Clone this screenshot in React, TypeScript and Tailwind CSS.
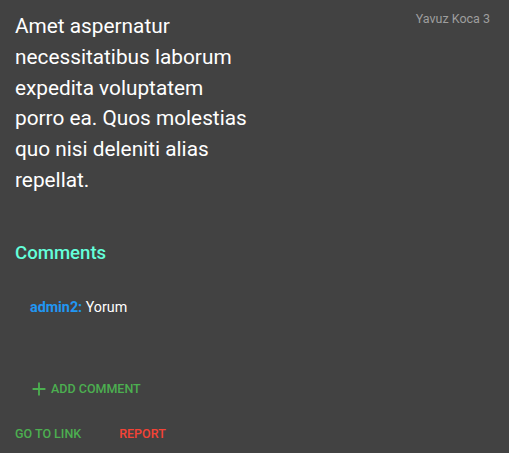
export default function App() {
  return (
    <div className="min-h-[453px] w-full bg-[#424242] font-['Roboto',sans-serif] text-white">
      {/* Gönderi başlığı ve yazar */}
      <div className="flex items-start justify-between pl-[15px] pr-[19px] pt-[11px]">
        <p className="w-[238px] text-[20.8px] leading-[30.8px]">
          Amet aspernatur necessitatibus laborum expedita voluptatem porro ea. Quos molestias quo nisi deleniti alias
          repellat.
        </p>
        <span className="-mt-[2px] text-[12.5px] leading-[20px] text-[#9e9e9e]">Yavuz Koca 3</span>
      </div>

      {/* Yorumlar */}
      <div className="mt-[43px] px-[15px]">
        <h3 className="text-[18.6px] font-medium leading-[28px] text-[#64ffda]">Comments</h3>
        <div className="mt-[30px] pl-[15px] text-[14.3px] leading-[20px]">
          <span className="font-bold text-[#2196f3]">admin2:</span> <span>Yorum</span>
        </div>
      </div>

      <div className="mt-[61px] pl-[28px]">
        <button className="flex items-center gap-[1px] text-[12.5px] font-medium uppercase leading-[22px] text-[#4caf50]">
          <svg viewBox="0 0 24 24" className="h-[22px] w-[22px]" fill="currentColor">
            <path d="M19 13h-6v6h-2v-6H5v-2h6V5h2v6h6v2z" />
          </svg>
          Add comment
        </button>
      </div>

      <div className="mt-[24px] flex gap-[38px] pl-[15px]">
        <button className="text-[12.5px] font-medium uppercase leading-[20px] text-[#4caf50]">Go to link</button>
        <button className="text-[12.5px] font-medium uppercase leading-[20px] text-[#f44336]">Report</button>
      </div>
    </div>
  )
}
